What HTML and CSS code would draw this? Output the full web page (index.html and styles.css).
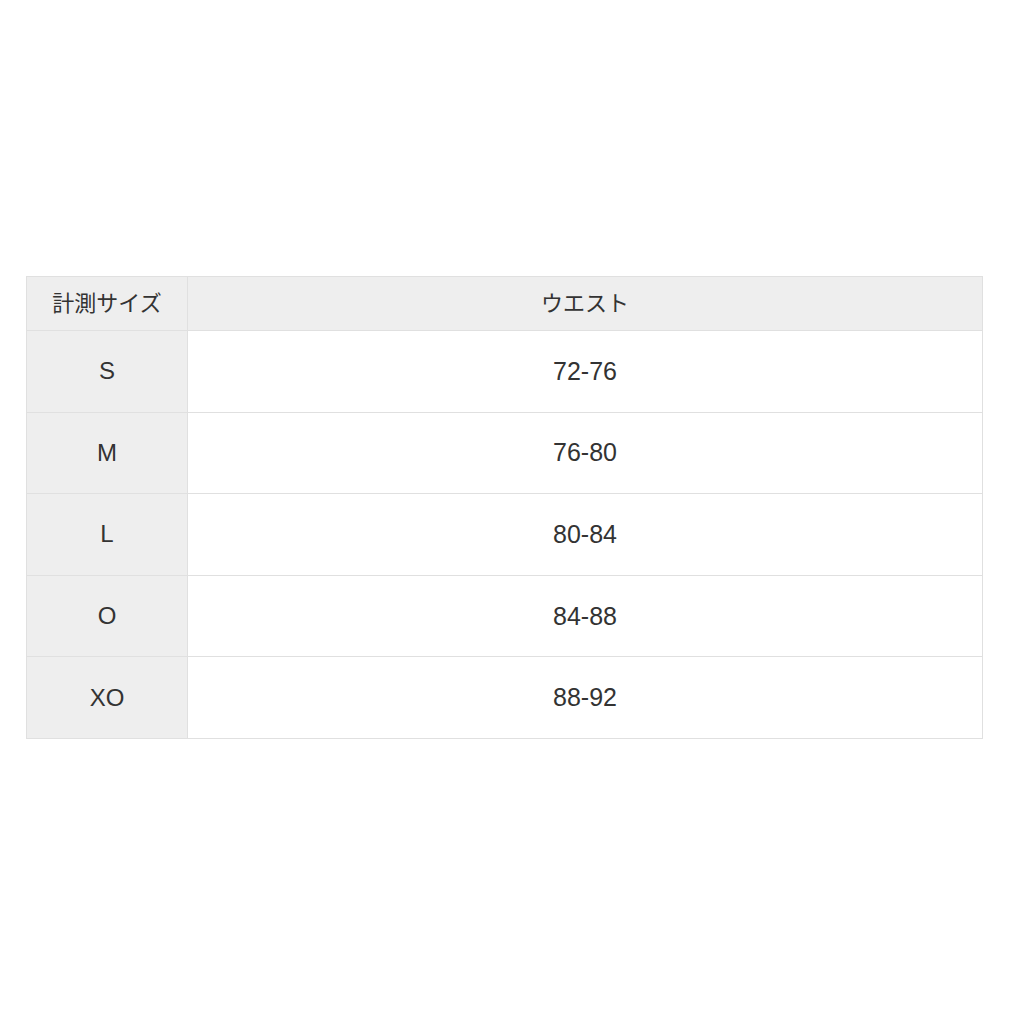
FILE: index.html
```html
<!DOCTYPE html>
<html lang="ja">
<head>
<meta charset="utf-8">
<link rel="stylesheet" href="styles.css">
</head>
<body>
<div class="page">
<table class="size-table">
  <thead>
    <tr><th class="head-label">計測サイズ</th><th class="head-col">ウエスト</th></tr>
  </thead>
  <tbody>
    <tr><th class="size">S</th><td>72-76</td></tr>
    <tr><th class="size">M</th><td>76-80</td></tr>
    <tr><th class="size">L</th><td>80-84</td></tr>
    <tr><th class="size">O</th><td>84-88</td></tr>
    <tr><th class="size">XO</th><td>88-92</td></tr>
  </tbody>
</table>
</div>
</body>
</html>
```
FILE: styles.css
```css
html, body {
  margin: 0;
  padding: 0;
  background: #ffffff;
}
.page {
  padding: 276px 27px 0 26px;
}
.size-table {
  width: 957px;
  border-collapse: collapse;
  font-family: "Liberation Sans", Arial, "Noto Sans CJK JP", sans-serif;
  color: #333333;
}
.size-table th,
.size-table td {
  border: 1px solid #e0e0e0;
  text-align: center;
  font-weight: normal;
  padding: 0;
}
.size-table thead th {
  background: #eeeeee;
  height: 48px;
  padding-bottom: 5px;
  font-size: 22px;
}
.head-label {
  width: 160px;
}
.size-table tbody th {
  background: #eeeeee;
  font-size: 24px;
  height: 80.6px;
}
.size-table tbody td {
  font-size: 25px;
  height: 80.6px;
  background: #ffffff;
}
```
